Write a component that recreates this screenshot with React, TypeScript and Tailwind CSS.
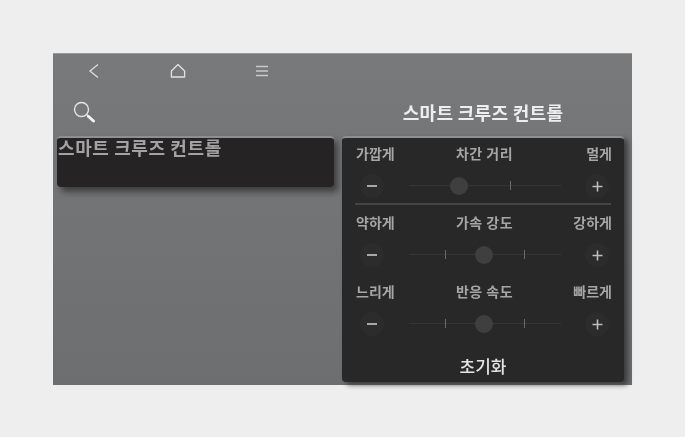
const font = { fontFamily: '"Noto Sans CJK KR", "Noto Sans", sans-serif' };

interface SliderRowProps {
  left: string;
  center: string;
  right: string;
  knob: number;
  ticks: number[];
  divider?: boolean;
  className: string;
}

function SliderRow({ left, center, right, knob, ticks, divider, className }: SliderRowProps) {
  return (
    <div className={className}>
      <div className="grid h-[20px] grid-cols-[1fr_auto_1fr] items-center pl-[14px] pr-[12px] text-[14px] font-semibold leading-[20px] text-[#a6a6a6]">
        <span>{left}</span>
        <span className="pl-[1px] tracking-[0.5px]">{center}</span>
        <span className="text-right">{right}</span>
      </div>
      <div className="mt-[10px] flex h-[26px] items-center justify-between pl-[18px] pr-[15px]">
        <div className="flex h-[24px] w-[24px] items-center justify-center rounded-full bg-[#2c2c2c]">
          <div className="h-[2px] w-[10px] bg-[#a8a8a8]" />
        </div>
        <div className="relative h-[26px] w-[152px]">
          <div className="absolute left-0 right-0 top-[12px] h-px bg-[#353535]" />
          {ticks.map((t) => (
            <div key={t} className="absolute top-[8px] h-[9px] w-px bg-[#6a6a6a]" style={{ left: t }} />
          ))}
          <div
            className="absolute top-[4px] h-[18px] w-[18px] rounded-full bg-[#3f3f3f]"
            style={{ left: knob }}
          />
        </div>
        <div className="flex h-[24px] w-[24px] items-center justify-center rounded-full bg-[#2c2c2c]">
          <svg width="11" height="11" viewBox="0 0 11 11">
            <path d="M5.5 0.5v10M0.5 5.5h10" stroke="#bdbdbd" strokeWidth="1.6" />
          </svg>
        </div>
      </div>
      {divider && <div className="mx-[13px] mt-[4px] h-[2px] bg-[#454545]" />}
    </div>
  );
}

export default function App() {
  return (
    <div className="h-[437px] w-[685px] overflow-hidden bg-[#eeeeee] pl-[53px] pt-[53px]" style={font}>
      <div className="flex h-[332px] w-[579px] flex-col border-t border-[#9a9a9a] bg-gradient-to-b from-[#78797b] to-[#6d6e70] blur-[0.4px]">
        <div className="flex h-[33px] shrink-0 items-center pl-[32px]">
          <div className="flex w-[84px] justify-start pl-[2px]">
            <svg width="14" height="16" viewBox="0 0 14 16" fill="none">
              <path d="M11 1.5 3 8l8 6.5" stroke="#dddddd" strokeWidth="1.3" />
            </svg>
          </div>
          <div className="flex w-[84px] justify-start pl-[1px]">
            <svg width="16" height="16" viewBox="0 0 16 16" fill="none">
              <path d="M8 1.5 14.6 8v6H1.4V8Z" stroke="#e2e2e2" strokeWidth="1.3" strokeLinejoin="round" />
            </svg>
          </div>
          <div className="flex w-[84px] justify-start pl-[2px]">
            <svg width="14" height="12" viewBox="0 0 14 12" fill="none">
              <path d="M1 1.5h12M1 6h12M1 10.5h12" stroke="#c9c9c9" strokeWidth="1.3" />
            </svg>
          </div>
        </div>
        <div className="flex min-h-0 flex-1 pl-[4px]">
          <div className="w-[277px] shrink-0">
            <div className="flex h-[49px] items-center pl-[15px]">
              <svg width="24" height="26" viewBox="0 0 24 26" fill="none">
                <circle cx="9.5" cy="10.5" r="7" stroke="#e6e6e6" strokeWidth="1.4" />
                <path d="M14.7 15.5l2 2" stroke="#e6e6e6" strokeWidth="1.4" />
                <path d="M16.5 17.5l5 4.5" stroke="#f5f5f5" strokeWidth="3" strokeLinecap="round" />
              </svg>
            </div>
            <div className="h-[51px] rounded-[4px] border-t-2 border-[#8f8f8f] bg-[#252324] text-[18px] font-semibold leading-[18px] tracking-[0.6px] text-[#a3a3a3] shadow-[4px_5px_6px_rgba(40,40,40,0.7)]">
              <span className="ml-[1px] block">스마트 크루즈 컨트롤</span>
            </div>
          </div>
          <div className="ml-[8px] flex w-[282px] shrink-0 flex-col">
            <div className="flex h-[49px] items-center justify-center pt-[1px] text-[18px] font-semibold tracking-[0.3px] text-[#eeeeee]">
              스마트 크루즈 컨트롤
            </div>
            <div className="h-[246px] rounded-[4px] border-t-2 border-[#8f8f8f] bg-[#292829] shadow-[4px_3px_5px_rgba(40,40,40,0.7)]">
              <SliderRow
                className="pt-[5px]"
                left="가깝게"
                center="차간 거리"
                right="멀게"
                knob={41}
                ticks={[101]}
                divider
              />
              <SliderRow
                className="pt-[7px]"
                left="약하게"
                center="가속 강도"
                right="강하게"
                knob={66}
                ticks={[36, 115]}
              />
              <SliderRow
                className="pt-[13px]"
                left="느리게"
                center="반응 속도"
                right="빠르게"
                knob={66}
                ticks={[36, 115]}
              />
              <div className="pt-[17px] text-center text-[17px] font-medium leading-[24px] text-[#e4e4e4]">초기화</div>
            </div>
          </div>
        </div>
      </div>
    </div>
  );
}
